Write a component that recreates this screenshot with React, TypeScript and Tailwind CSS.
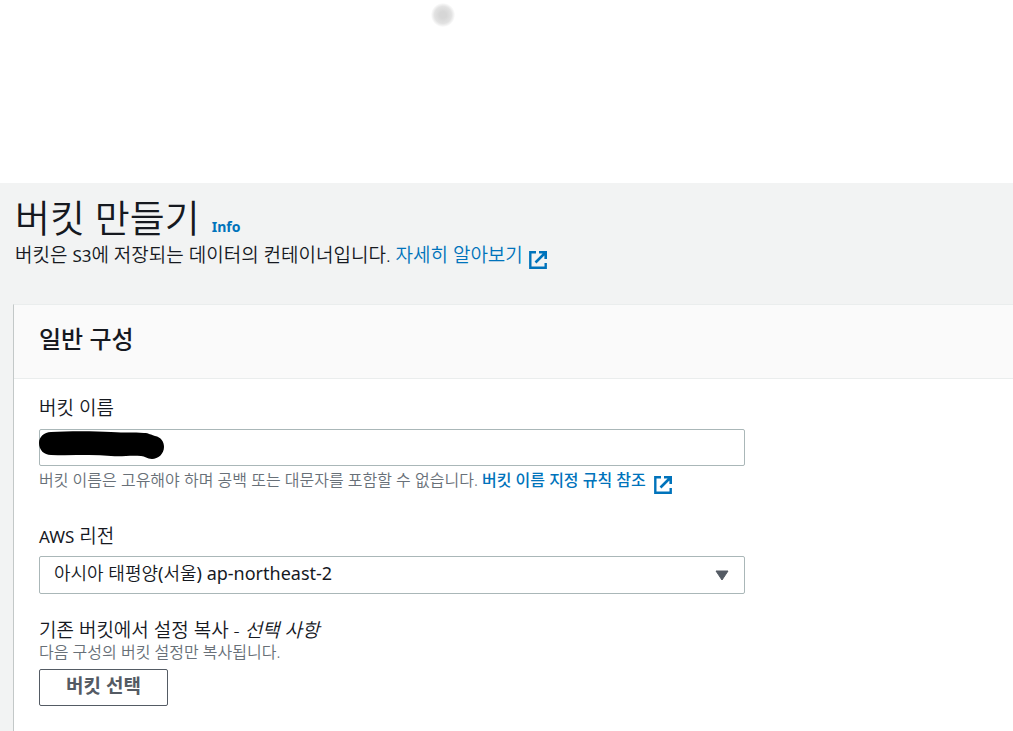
import { useState } from 'react';
import type { ReactNode } from 'react';

interface FieldProps {
  label: ReactNode;
  htmlFor: string;
  children: ReactNode;
}

function ExternalIcon() {
  return (
    <svg viewBox="0 0 18 18" className="mt-2.5 h-[18px] w-[18px] shrink-0" fill="none" stroke="currentColor" strokeWidth="2.4" aria-hidden="true">
      <path d="M7 1.3H1.3v15.4h15.4V12" />
      <path d="M10 1.3h6.7V8M16.5 1.5L6.5 11.5" strokeWidth="2.6" />
    </svg>
  );
}

function Field({ label, htmlFor, children }: FieldProps) {
  return (
    <div>
      <label htmlFor={htmlFor} className="block text-[19px] leading-6 text-[#16191f]">
        {label}
      </label>
      {children}
    </div>
  );
}

// Marker stroke that hides the account's bucket name
function Redaction() {
  return (
    <svg viewBox="0 0 126 29" className="pointer-events-none absolute top-0.5 left-0 h-[29px] w-[126px]" aria-hidden="true">
      <path
        d="M12 1C28 0 56 0 72 1C87 2 94 1 105 2C110 2 112 4 116 5C122 6 125 11 125 16C125 23 119 28 113 28C108 28 106 25 102 25C90 24 84 26 72 25C52 23 32 25 12 24C5 24 0 19 0 12C0 6 5 1 12 1Z"
        fill="#000"
      />
    </svg>
  );
}

export default function App() {
  const [bucketName, setBucketName] = useState('');
  const [region, setRegion] = useState('ap-northeast-2');

  return (
    <div className="flex min-h-screen flex-col bg-white font-['Noto_Sans','Noto_Sans_CJK_KR',sans-serif] font-[350] text-[#16191f]">
      <div className="flex h-[183px] shrink-0 justify-center pr-32">
        <span className="mt-[3px] h-6 w-6 rounded-full bg-[radial-gradient(circle,#d6d6d6_20%,#e2e2e2_50%,#ffffff_72%)]" />
      </div>

      <main className="flex grow flex-col bg-[#f2f3f3] pl-[13px]">
        {/* Page header */}
        <header className="px-0.5 pt-2.5">
          <div className="flex items-baseline gap-3">
            <h1 className="text-[38px] leading-12">버킷 만들기</h1>
            <a href="#info" className="text-sm font-bold text-[#0073bb]">Info</a>
          </div>
          <p className="flex items-start text-[19px] leading-7">
            <span className="whitespace-pre">버킷은 <span className="text-[17px] font-normal">S3</span>에 저장되는 데이터의 컨테이너입니다. </span>
            <a href="#learn" className="flex items-start gap-1.5 text-[#0073bb]">
              자세히 알아보기
              <ExternalIcon />
            </a>
          </p>
        </header>

        {/* General configuration */}
        <section className="mt-[34px] flex grow flex-col border-t border-l border-t-[#eaeded] border-l-[#c3c8c8] bg-white">
          <div className="border-b border-[#eaeded] bg-[#fafafa] px-[25px] pt-[18px] pb-[23px]">
            <h2 className="text-2xl leading-8 font-medium">일반 구성</h2>
          </div>

          <div className="flex max-w-[756px] flex-col gap-6 px-[25px] py-[17px]">
            <Field label="버킷 이름" htmlFor="bucket-name">
              <div className="relative mt-[9px]">
                <input
                  id="bucket-name"
                  value={bucketName}
                  onChange={(e) => setBucketName(e.target.value)}
                  className="block h-[37px] w-full rounded-xs border border-[#aab7b8] bg-white px-3"
                />
                <Redaction />
              </div>
              <p className="flex items-start pb-1.5 text-base leading-7 text-[#687078]">
                <span className="whitespace-pre">버킷 이름은 고유해야 하며 공백 또는 대문자를 포함할 수 없습니다. </span>
                <a href="#rules" className="flex items-start gap-2 font-medium text-[#0073bb]">
                  버킷 이름 지정 규칙 참조
                  <ExternalIcon />
                </a>
              </p>
            </Field>

            <Field label={<><span className="text-[17px] font-normal">AWS</span> 리전</>} htmlFor="region">
              <div className="relative mt-[7px]">
                <select
                  id="region"
                  value={region}
                  onChange={(e) => setRegion(e.target.value)}
                  className="block h-[38px] w-full appearance-none rounded-xs border border-[#aab7b8] bg-white px-3.5 pb-1 font-['Noto_Sans','Noto_Sans_CJK_KR_DemiLight','Noto_Sans_CJK_KR',sans-serif] text-lg leading-6 font-normal"
                >
                  <option value="ap-northeast-2">아시아 태평양(서울) ap-northeast-2</option>
                </select>
                <svg viewBox="0 0 14 11" className="pointer-events-none absolute top-3.5 right-4 h-[11px] w-3.5" aria-hidden="true">
                  <path d="M1 1h12L7 10z" fill="#545b64" stroke="#545b64" strokeLinejoin="round" />
                </svg>
              </div>
            </Field>

            <Field
              label={<>기존 버킷에서 설정 복사 - <i>선택 사항</i></>}
              htmlFor="choose-bucket"
            >
              <p className="text-base leading-5 text-[#687078]">다음 구성의 버킷 설정만 복사됩니다.</p>
              <button
                id="choose-bucket"
                type="button"
                className="mt-[7px] h-[37px] rounded-xs border border-[#545b64] bg-white px-[26px] pb-1 text-[19px] leading-6 font-bold text-[#545b64]"
              >
                버킷 선택
              </button>
            </Field>
          </div>
        </section>
      </main>
    </div>
  );
}
